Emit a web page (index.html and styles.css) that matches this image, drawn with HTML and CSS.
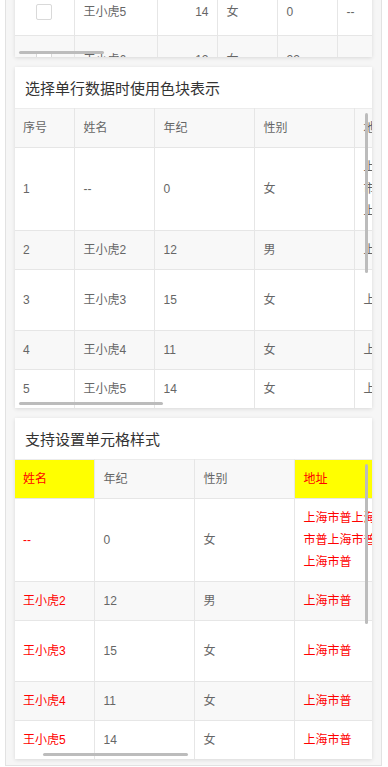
FILE: index.html
```html
<!DOCTYPE html>
<html lang="zh-CN">
<head>
<meta charset="utf-8">
<title>表格</title>
<link rel="stylesheet" href="styles.css">
</head>
<body>
<div class="page">
  <div class="card">
    <div class="scroll scroll-stub">
      <table class="grid grid-check">
        <colgroup><col class="w59"><col class="w83"><col class="w60"><col class="w60"><col class="w60"><col class="w60"></colgroup>
        <tbody>
          <tr class="row-a"><td class="c-check"><span class="checkbox"></span></td><td>王小虎5</td><td class="num">14</td><td>女</td><td>0</td><td>--</td></tr>
          <tr class="stripe row-b"><td class="c-check"><span class="checkbox"></span></td><td>王小虎6</td><td class="num">12</td><td>女</td><td>22</td><td>--</td></tr>
        </tbody>
      </table>
      <div class="hbar hbar-1"></div>
    </div>
  </div>

  <div class="card">
    <div class="card-title">选择单行数据时使用色块表示</div>
    <div class="scroll">
      <table class="grid grid-index">
        <colgroup><col class="w59"><col class="w80"><col class="w100"><col class="w100"><col class="w100"></colgroup>
        <thead>
          <tr><th>序号</th><th>姓名</th><th>年纪</th><th>性别</th><th>地址</th></tr>
        </thead>
        <tbody>
          <tr><td>1</td><td>--</td><td>0</td><td>女</td><td>上海市普上海市普上海市普上海市普</td></tr>
          <tr class="stripe"><td>2</td><td>王小虎2</td><td>12</td><td>男</td><td>上海市普</td></tr>
          <tr class="tall"><td>3</td><td>王小虎3</td><td>15</td><td>女</td><td>上海市普</td></tr>
          <tr class="stripe"><td>4</td><td>王小虎4</td><td>11</td><td>女</td><td>上海市普</td></tr>
          <tr><td>5</td><td>王小虎5</td><td>14</td><td>女</td><td>上海市普</td></tr>
        </tbody>
      </table>
      <div class="vbar"></div>
      <div class="hbar hbar-2"></div>
    </div>
  </div>

  <div class="card">
    <div class="card-title">支持设置单元格样式</div>
    <div class="scroll">
      <table class="grid grid-style">
        <colgroup><col class="w79"><col class="w100"><col class="w100"><col class="w100"></colgroup>
        <thead>
          <tr><th class="hl">姓名</th><th>年纪</th><th>性别</th><th class="hl">地址</th></tr>
        </thead>
        <tbody>
          <tr><td class="red">--</td><td>0</td><td>女</td><td class="red">上海市普上海市普上海市普上海市普</td></tr>
          <tr class="stripe"><td class="red">王小虎2</td><td>12</td><td>男</td><td class="red">上海市普</td></tr>
          <tr class="tall"><td class="red">王小虎3</td><td>15</td><td>女</td><td class="red">上海市普</td></tr>
          <tr class="stripe"><td class="red">王小虎4</td><td>11</td><td>女</td><td class="red">上海市普</td></tr>
          <tr><td class="red">王小虎5</td><td>14</td><td>女</td><td class="red">上海市普</td></tr>
        </tbody>
      </table>
      <div class="vbar"></div>
      <div class="hbar hbar-3"></div>
    </div>
  </div>
</div>
</body>
</html>
```

FILE: styles.css
```css
html, body {
  margin: 0;
  padding: 0;
  background: #ffffff;
}

body {
  font-family: "Liberation Sans", "Noto Sans CJK SC", sans-serif;
  color: #666666;
  overflow: hidden;
}

.page {
  margin: -21px 6px 0 5px;
  border: 1px solid #e2e2e2;
  background: #f6f6f6;
  padding: 9px 9px 6px 9px;
  display: flex;
  flex-direction: column;
  gap: 10px;
}

.card {
  background: #ffffff;
  box-shadow: 0 1px 4px rgba(0, 0, 0, 0.12);
  overflow: hidden;
}

.card-title {
  height: 41px;
  box-sizing: border-box;
  padding: 11px 10px 0 10px;
  font-size: 15px;
  line-height: 22px;
  color: #333333;
}

.scroll {
  position: relative;
  height: 300px;
  overflow: hidden;
}

.scroll-stub {
  height: 68px;
}

.grid {
  border-collapse: collapse;
  table-layout: fixed;
  font-size: 12px;
  line-height: 22px;
}

.grid-check { width: 382px; }
.grid-index { width: 439px; }
.grid-style { width: 379px; }

.w59 { width: 59px; }
.w60 { width: 60px; }
.w79 { width: 79px; }
.w80 { width: 80px; }
.w83 { width: 83px; }
.w100 { width: 100px; }

.grid th,
.grid td {
  padding: 8px 9px;
  text-align: left;
  vertical-align: middle;
  font-weight: normal;
  border-right: 1px solid #e6e6e6;
  border-bottom: 1px solid #e6e6e6;
  word-break: break-all;
}

.grid th:first-child,
.grid td:first-child {
  padding-left: 8px;
}

.grid thead tr {
  border-top: 1px solid #ececec;
}

.grid th {
  background: #f8f8f8;
  color: #666666;
}

.grid tr.stripe td {
  background: #f8f8f8;
}

.grid tr.tall {
  height: 61px;
}

.grid tr.row-a {
  height: 46px;
}

.grid tr.row-b {
  height: 50px;
}

.grid td.num {
  text-align: right;
  padding-right: 8px;
}

.grid td.c-check {
  text-align: center;
  padding: 0;
}

.checkbox {
  display: inline-block;
  width: 14px;
  height: 14px;
  border: 1px solid #d9d9d9;
  border-radius: 2px;
  background: #ffffff;
  vertical-align: middle;
  margin-top: -2px;
}

.grid th.hl {
  background: #ffff00;
  color: #ff0000;
}

.grid td.red {
  color: #ff0000;
}

.vbar {
  position: absolute;
  top: 5px;
  right: 4px;
  width: 3px;
  height: 160px;
  border-radius: 2px;
  background: #bcbcbc;
}

.hbar {
  position: absolute;
  bottom: 3px;
  height: 3px;
  border-radius: 2px;
  background: #bcbcbc;
}

.hbar-1 { left: 4px; width: 85px; }
.hbar-2 { left: 4px; width: 144px; }
.hbar-3 { left: 28px; width: 145px; }
```
